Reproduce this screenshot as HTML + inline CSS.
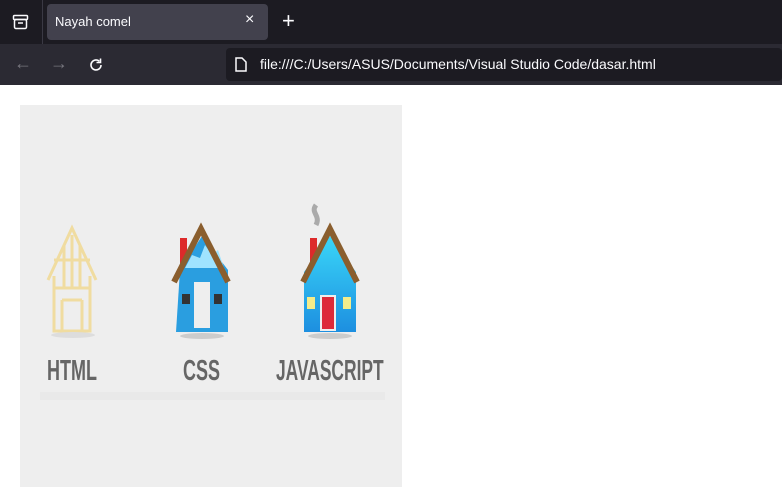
<!DOCTYPE html><html><head><style>
body{margin:0;width:782px;height:493px;background:#fff;position:relative;overflow:hidden;font-family:"Liberation Sans",sans-serif}
.a{position:absolute}
.lbl{position:absolute;top:355px;font-size:29px;font-weight:bold;color:#666;font-family:"Liberation Sans",sans-serif;transform:scaleX(.62);transform-origin:left top;white-space:nowrap}
</style></head><body>
<div class="a" style="left:0;top:0;width:782px;height:44px;background:#1c1b22"></div>
<div class="a" style="left:42px;top:0;width:1px;height:44px;background:#3a3944"></div>
<svg class="a" style="left:12px;top:14px" width="17" height="16" viewBox="0 0 17 16"><rect x="1.5" y="1.5" width="14" height="4" rx="1" fill="none" stroke="#fbfbfe" stroke-width="1.5"/><rect x="2.5" y="5.5" width="12" height="9" rx="1.5" fill="none" stroke="#fbfbfe" stroke-width="1.5"/><line x1="6" y1="9" x2="11" y2="9" stroke="#fbfbfe" stroke-width="1.5"/></svg>
<div class="a" style="left:47px;top:4px;width:221px;height:36px;background:#42414d;border-radius:4px"></div>
<div class="a" style="left:55px;top:14px;color:#fbfbfe;font-size:13px">Nayah comel</div>
<div class="a" style="left:245px;top:11px;color:#fbfbfe;font-size:16px">×</div>
<div class="a" style="left:282px;top:8px;color:#fbfbfe;font-size:22px;font-weight:300">+</div>
<div class="a" style="left:0;top:44px;width:782px;height:41px;background:#2b2a33"></div>
<div class="a" style="left:14px;top:53px;color:#77767e;font-size:18px">←</div>
<div class="a" style="left:50px;top:53px;color:#77767e;font-size:18px">→</div>
<svg class="a" style="left:88px;top:57px" width="16" height="16" viewBox="0 0 16 16"><path d="M13 8a5 5 0 1 1-1.6-3.7" fill="none" stroke="#fbfbfe" stroke-width="1.6"/><path d="M12.5 1.5v4h-4" fill="none" stroke="#fbfbfe" stroke-width="1.6"/></svg>
<div class="a" style="left:226px;top:48px;width:556px;height:33px;background:#1c1b22;border-radius:4px"></div>
<svg class="a" style="left:235px;top:57px" width="12" height="15" viewBox="0 0 12 15"><path d="M1 1h6l4 4v9H1z" fill="none" stroke="#fbfbfe" stroke-width="1.5"/></svg>
<div class="a" style="left:260px;top:56px;color:#fbfbfe;font-size:14px">file:///C:/Users/ASUS/Documents/Visual Studio Code/dasar.html</div>
<div class="a" style="left:20px;top:105px;width:382px;height:382px;background:#eeeeee"></div>
<div class="a" style="left:40px;top:392px;width:345px;height:8px;background:#e9e9e9"></div>
<svg class="a" style="left:40px;top:200px" width="360" height="145" viewBox="0 0 360 145">
<defs><linearGradient id="g" x1="0" y1="0" x2="0" y2="1"><stop offset="0" stop-color="#3ad6f8"/><stop offset="1" stop-color="#1d8fe0"/></linearGradient></defs>
<g fill="none" stroke="#f0dca0" stroke-width="3"><path d="M8 80L32 28L56 80"/><path d="M14 76V131H50V76"/><path d="M14 88H50M14 60H50M32 35V88M24 45V88M40 45V88M22 100V131M42 100V131M22 100H42"/></g>
<ellipse cx="33" cy="135" rx="22" ry="3" fill="#ddd"/>
<rect x="140" y="38" width="7" height="26" fill="#dd2a2a"/>
<path d="M140 70 L162 36 L188 70 L188 132 H136 Z" fill="#2a9ee0"/>
<path d="M145 68 L152 55 L160 58 L165 45 L172 55 L178 50 L184 68 Z" fill="#9fe3ff"/>
<rect x="154" y="82" width="16" height="46" fill="#eee"/>
<rect x="142" y="94" width="8" height="10" fill="#333"/><rect x="174" y="94" width="8" height="10" fill="#333"/>
<path d="M134 82L161 29L188 82" fill="none" stroke="#8a5e2e" stroke-width="6"/>
<ellipse cx="162" cy="136" rx="22" ry="3" fill="#ccc"/>
<path d="M276 5c-6 8 5 10 0 20" fill="none" stroke="#aaa" stroke-width="5"/>
<rect x="270" y="38" width="7" height="26" fill="#dd2a2a"/>
<path d="M290 36L316 72V132H264V72Z" fill="url(#g)"/>
<rect x="281" y="96" width="14" height="34" fill="#dd2a3a" stroke="#eee" stroke-width="2"/>
<rect x="267" y="97" width="8" height="12" fill="#f5ec8a"/><rect x="303" y="97" width="8" height="12" fill="#f5ec8a"/>
<path d="M263 82L290 29L317 82" fill="none" stroke="#8a5e2e" stroke-width="6"/>
<ellipse cx="290" cy="136" rx="22" ry="3" fill="#ccc"/>
</svg>
<div class="lbl" style="left:47px">HTML</div>
<div class="lbl" style="left:183px">CSS</div>
<div class="lbl" style="left:276px;transform:scaleX(.6)">JAVASCRIPT</div>
</body></html>
